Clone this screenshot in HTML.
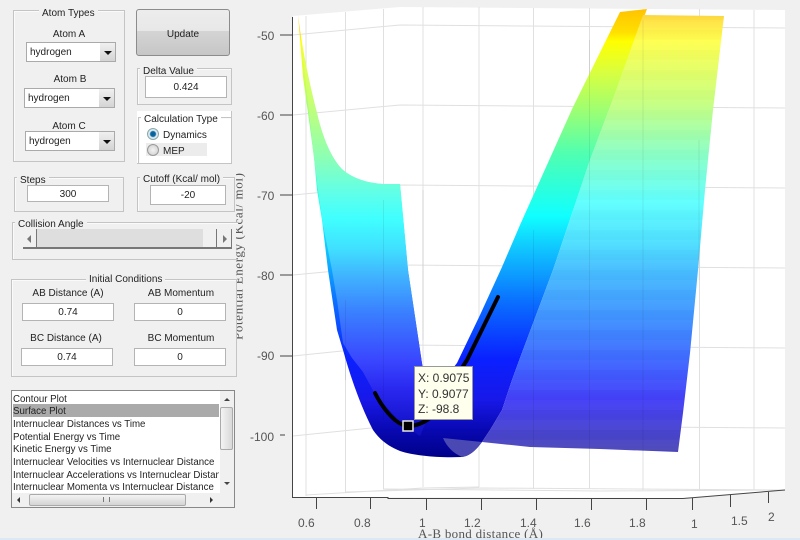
<!DOCTYPE html>
<html><head><meta charset="utf-8"><style>
html,body{margin:0;padding:0;width:800px;height:540px;overflow:hidden;background:#f0f0f0}
#r{position:relative;width:800px;height:540px;overflow:hidden;font:10px "Liberation Sans",sans-serif;color:#222;filter:blur(.35px);background:#f0f0f0}
#r div{position:absolute;box-sizing:border-box}
svg{position:absolute;left:0;top:0}
.p{border:1px solid #c4c4c4;box-shadow:inset 1px 1px 0 #fafafa}
.l{background:#f0f0f0;padding:0 3px;line-height:15px;height:12px;white-space:nowrap}
.c{text-align:center;line-height:15px;height:12px;white-space:nowrap}
.i{background:#fff;border:1px solid #b4b4b4;text-align:center;white-space:nowrap;padding-top:1.500px}
.s{background:#fff;border:1px solid #aaa;padding:2.500px 0 0 3px;white-space:nowrap}
.b{right:0;top:0;bottom:0;width:15px;background:linear-gradient(#f0f0f0,#d4d4d4)}
.b:after{content:"";position:absolute;left:4px;top:8px;border:4px solid transparent;border-top:4px solid #111;border-bottom:0}
.li{left:1px;width:206px;height:13px;line-height:15px;padding-left:0;overflow:hidden;white-space:nowrap;font-size:9.700px}
</style></head><body><div id="r">
<svg width="800" height="540" viewBox="0 0 800 540">
<defs>
<linearGradient id="d" gradientUnits="userSpaceOnUse" x1="0" y1="10" x2="0" y2="458">
<stop offset="0" stop-color="#ffc400"/><stop offset=".05" stop-color="#ffe000"/><stop offset=".07" stop-color="#ffff00"/>
<stop offset=".14" stop-color="#d8ff40"/><stop offset=".22" stop-color="#a0ff70"/><stop offset=".32" stop-color="#50ffb0"/>
<stop offset=".46" stop-color="#10ffff"/><stop offset=".53" stop-color="#10c8ff"/><stop offset=".65" stop-color="#0a70ff"/>
<stop offset=".78" stop-color="#0a20ff"/><stop offset=".87" stop-color="#1818e8"/><stop offset=".94" stop-color="#0808b0"/><stop offset="1" stop-color="#000088"/>
</linearGradient>
<linearGradient id="l" gradientUnits="userSpaceOnUse" x1="0" y1="14" x2="0" y2="452">
<stop offset="0" stop-color="#ffd840"/><stop offset=".06" stop-color="#ffff50"/><stop offset=".2" stop-color="#c8ff80"/>
<stop offset=".31" stop-color="#90ffc0"/><stop offset=".43" stop-color="#60ffff"/><stop offset=".52" stop-color="#50e0ff"/>
<stop offset=".58" stop-color="#48c0ff"/><stop offset=".7" stop-color="#4090ff"/><stop offset=".81" stop-color="#4060ff"/>
<stop offset=".88" stop-color="#4440f8"/><stop offset=".95" stop-color="#4844d0"/><stop offset="1" stop-color="#4c48b8"/>
</linearGradient>
<linearGradient id="f" gradientUnits="userSpaceOnUse" x1="0" y1="14" x2="0" y2="440">
<stop offset="0" stop-color="#ffff40"/><stop offset=".2" stop-color="#c8ff70"/>
<stop offset=".33" stop-color="#90ffb0"/><stop offset=".42" stop-color="#60ffe8"/><stop offset=".48" stop-color="#40ffff"/><stop offset=".55" stop-color="#40e0ff"/>
<stop offset=".62" stop-color="#40b0ff"/><stop offset=".7" stop-color="#3a80ff"/><stop offset=".81" stop-color="#3a48ff"/>
<stop offset=".88" stop-color="#2a28f0"/><stop offset=".97" stop-color="#1212c8"/><stop offset="1" stop-color="#1010b8"/>
</linearGradient>
<pattern id="bd" patternUnits="userSpaceOnUse" width="20" height="20"><rect width="20" height="10" fill="#fff" fill-opacity=".02"/><rect y="10" width="20" height="10" fill="#000" fill-opacity=".012"/></pattern>
</defs>
<polygon points="293,16 400,7 785,10 785,490 683,498 293,497" fill="#fff"/>
<g stroke="#e0e0e0" fill="none">
<path d="M293,35 L400,25 L785,28M293,115 L400,105 L785,108M293,195 L400,185 L785,188M293,275 L400,265 L785,268M293,356 L400,345 L785,348M293,436 L400,425 L785,428"/>
<path d="M306,16V496M345.500,12V492M383.500,9V489M423,7V487M479,7V487M533.500,8V489M589.500,8V489M643,9V490M699.500,9V490M754,10V490"/>
<path d="M306,495 L423,488 L479,487M345,492 L480,488 L785,490M383,489 L600,491 L785,490"/>
</g>
<path fill="url(#d)" d="M298,14 L303,77 L308,113 L314,157 L317,190 L322,220 L328,270 L337,330 L343,350 C350,375 360,405 373,430 C380,440 388,446 400,451 C415,456 440,458 462,457 C470,456 476,450 482,442 L490,430 L502,410 L512,380 L520,358 L553,270 L590,160 L610,107 L647,9 L620,12 L573,107 L520,225 L502,267 L480,315 L457,363 L432,395 L423,370 L408,270 L400,184 L383,184 C365,183 351,177 343,170 C333,161 323,140 317,113 C311,90 302,50 298,14 Z"/>
<path fill="url(#f)" d="M301,40 L306,85 L313,150 L318,190 L323,225 L332,270 L337,300 L343,343 L352,358 L363,372 L375,394 L400,422 L420,436 L436,398 L432,392 L423,370 L408,270 L400,184 L383,184 C365,183 351,177 343,170 C333,161 323,140 317,113 C311,90 304,60 301,40 Z"/>
<path fill="url(#l)" d="M643,15 L724,16 L713,110 L705,190 L698,270 L690,353 L683,413 L678,452 L600,449 L530,447 L482,442 L490,430 L502,410 L512,380 L520,358 L553,270 L590,160 L610,107 Z"/>
<path fill="url(#bd)" d="M643,15 L724,16 L713,110 L705,190 L698,270 L690,353 L683,413 L678,452 L600,449 L530,447 L482,442 L490,430 L502,410 L512,380 L520,358 L553,270 L590,160 L610,107 Z"/>
<path fill="#4a48b2" d="M443,438 C447,447 453,453 462,457 C470,456 476,450 482,442 Z"/>
<path d="M345.500,300V380M383.500,200V420M423,190V340M533.500,230V446M589.500,40V449M643,20V451M699,140V280" stroke="#000" stroke-opacity=".07" fill="none"/>
<path d="M375,393 C380,403 386,412 395,420 C400,424 404,426 408,426 C415,426 422,424 430,418 L467,360 L498,297" fill="none" stroke="#000" stroke-width="4" stroke-linecap="round"/>
<rect x="403" y="421" width="10" height="10" fill="#000" stroke="#e8e8e0" stroke-width="1.500"/>
<path d="M292.500,17V497.500H388V498.500H582L683,498.500L785,490" fill="none" stroke="#444"/>
<path d="M280,35H293M280,115H293M280,195H293M280,275H293M280,356H293M280,435H285M316.500,497V509M370.500,497V509M426.500,498V510M481.500,498V510M536.500,498V510M591.500,498V510M646.500,498V510M692.500,498V510M730.500,495V507M768.500,492V503" stroke="#444" fill="none"/>
<g font-family="Liberation Sans" font-size="12" fill="#555">
<text x="257" y="40">-50</text><text x="257" y="120">-60</text><text x="257" y="200">-70</text><text x="257" y="280">-80</text><text x="257" y="360">-90</text><text x="250" y="441">-100</text>
<text x="298" y="527">0.6</text><text x="354" y="527">0.8</text><text x="419" y="527">1</text><text x="464" y="527">1.2</text><text x="520" y="527">1.4</text><text x="574" y="527">1.6</text><text x="629" y="527">1.8</text><text x="691" y="528">1</text><text x="731" y="525">1.5</text><text x="768" y="521">2</text>
</g>
<text x="418" y="538" font-family="Liberation Serif" font-size="13" fill="#555" letter-spacing=".3">A-B bond distance (Å)</text>
<text transform="translate(242.500,340) rotate(-90)" font-family="Liberation Serif" font-size="13" fill="#555" textLength="167">Potential Energy (Kcal/ mol)</text>
</svg>
<div style="left:0;top:0;width:236px;height:538px;background:#f0f0f0"></div>
<div style="left:0;top:538px;width:800px;height:2px;background:#dce8f5"></div>

<div class="p" style="left:13px;top:10px;width:112px;height:152px"></div>
<div class="l" style="left:39px;top:6px">Atom Types</div>
<div class="c" style="left:29px;top:27px;width:80px">Atom A</div>
<div class="s" style="left:26px;top:42px;width:90px;height:20px;line-height:14px">hydrogen<div class="b"></div></div>
<div class="c" style="left:30px;top:72px;width:80px">Atom B</div>
<div class="s" style="left:24px;top:88px;width:91px;height:20px;line-height:14px">hydrogen<div class="b"></div></div>
<div class="c" style="left:29px;top:119px;width:80px">Atom C</div>
<div class="s" style="left:25px;top:131px;width:90px;height:20px;line-height:14px">hydrogen<div class="b"></div></div>

<div style="left:136px;top:9px;width:94px;height:47px;border:1px solid #8c8c8c;border-radius:3px;background:linear-gradient(#ececec 0,#e8e8e8 46%,#d4d4d4 47%,#c6c6c6 100%);text-align:center;line-height:45px;padding-top:2px">Update</div>

<div class="p" style="left:137px;top:68px;width:95px;height:37px"></div>
<div class="l" style="left:140px;top:64px">Delta Value</div>
<div class="i" style="left:145px;top:76px;width:82px;height:22px;line-height:17px">0.424</div>

<div style="left:137px;top:111px;width:95px;height:53px;background:#fff;border-right:1px solid #c4c4c4;border-bottom:1px solid #c4c4c4"></div>
<div class="p" style="left:138px;top:117px;width:94px;height:47px;background:#fff"></div>
<div class="l" style="left:141px;top:112px;background:#fff">Calculation Type</div>
<div style="left:146px;top:143px;width:61px;height:13px;background:#ececec"></div>
<div style="left:147px;top:128px;width:12px;height:12px;border-radius:50%;border:1px solid #8aa;background:radial-gradient(circle,#0a5a90 0,#0a6aa8 35%,#dfe8ee 50%,#dfe8ee 100%)"></div>
<div style="left:147px;top:144px;width:12px;height:12px;border-radius:50%;border:1px solid #999;background:radial-gradient(circle,#f2f2f2,#ccc)"></div>
<div style="left:163px;top:130px;line-height:12px">Dynamics</div>
<div style="left:163px;top:146px;line-height:12px">MEP</div>

<div class="p" style="left:14px;top:177px;width:110px;height:35px"></div>
<div class="l" style="left:17px;top:173px">Steps</div>
<div class="i" style="left:27px;top:185px;width:82px;height:17px;line-height:13px">300</div>

<div class="p" style="left:137px;top:177px;width:98px;height:35px"></div>
<div class="l" style="left:140px;top:172px">Cutoff (Kcal/ mol)</div>
<div class="i" style="left:150px;top:185px;width:76px;height:20px;line-height:16px">-20</div>

<div class="p" style="left:12px;top:222px;width:226px;height:38px;border-right:0"></div>
<div class="l" style="left:15px;top:217px">Collision Angle</div>
<div style="left:23px;top:229px;width:209px;height:20px;background:#dedede;border-bottom:2px solid #777"></div>
<div style="left:23px;top:229px;width:14px;height:20px;background:#f0f0f0;border-right:1px solid #777;border-bottom:2px solid #777"></div>
<div style="left:203px;top:229px;width:14px;height:20px;background:#f0f0f0;border-bottom:2px solid #777;border-right:1px solid #777"></div>
<div style="left:217px;top:229px;width:15px;height:20px;background:#f0f0f0;border-bottom:2px solid #777;border-right:1px solid #777"></div>
<div style="left:27px;top:235px;border:4px solid transparent;border-right:4px solid #777;border-left:0"></div>
<div style="left:223px;top:235px;border:4px solid transparent;border-left:4px solid #777;border-right:0"></div>

<div class="p" style="left:11px;top:279px;width:226px;height:98px"></div>
<div class="l" style="left:86px;top:272px">Initial Conditions</div>
<div class="c" style="left:18px;top:286px;width:100px">AB Distance (A)</div>
<div class="c" style="left:131px;top:286px;width:100px">AB Momentum</div>
<div class="i" style="left:22px;top:303px;width:92px;height:18px;line-height:14px">0.74</div>
<div class="i" style="left:134px;top:303px;width:92px;height:18px;line-height:14px">0</div>
<div class="c" style="left:16px;top:331px;width:100px">BC Distance (A)</div>
<div class="c" style="left:131px;top:331px;width:100px">BC Momentum</div>
<div class="i" style="left:21px;top:348px;width:92px;height:18px;line-height:14px">0.74</div>
<div class="i" style="left:134px;top:348px;width:92px;height:18px;line-height:14px">0</div>

<div style="left:11px;top:390px;width:224px;height:118px;background:#fff;border:1px solid #888">
<div class="li" style="top:1px">Contour Plot</div>
<div class="li" style="top:13px;background:#aaa">Surface Plot</div>
<div class="li" style="top:26px">Internuclear Distances vs Time</div>
<div class="li" style="top:39px">Potential Energy vs Time</div>
<div class="li" style="top:51px">Kinetic Energy vs Time</div>
<div class="li" style="top:64px">Internuclear Velocities vs Internuclear Distance</div>
<div class="li" style="top:77px">Internuclear Accelerations vs Internuclear Distance</div>
<div class="li" style="top:89px">Internuclear Momenta vs Internuclear Distance</div>
<div style="left:208px;top:0;width:14px;height:102px;background:#f0f0f0"></div>
<div style="left:208px;top:16px;width:13px;height:43px;background:linear-gradient(90deg,#f4f4f4,#d8d8d8);border:1px solid #aaa;border-radius:2px"></div>
<div style="left:212px;top:7px;border:3px solid transparent;border-bottom:3px solid #444;border-top:0"></div>
<div style="left:212px;top:91px;border:3px solid transparent;border-top:3px solid #444;border-bottom:0"></div>
<div style="left:0;top:102px;width:222px;height:14px;background:#f0f0f0"></div>
<div style="left:17px;top:103px;width:157px;height:12px;background:linear-gradient(#f4f4f4,#d4d4d4);border:1px solid #aaa;border-radius:2px"></div>
<div style="left:5px;top:106px;border:3px solid transparent;border-right:3px solid #333;border-left:0"></div>
<div style="left:198px;top:106px;border:3px solid transparent;border-left:3px solid #333;border-right:0"></div>
<div style="left:91px;top:106px;width:7px;height:5px;border-left:1px solid #777;border-right:1px solid #777"></div>
</div>
<div style="left:414px;top:366px;width:59px;height:54px;background:#ffffee;border:1px solid #999;font-size:12px;line-height:15.500px;color:#333;padding:4px 0 0 3px;white-space:nowrap">X: 0.9075<br>Y: 0.9077<br>Z: -98.8</div>
</div></body></html>
